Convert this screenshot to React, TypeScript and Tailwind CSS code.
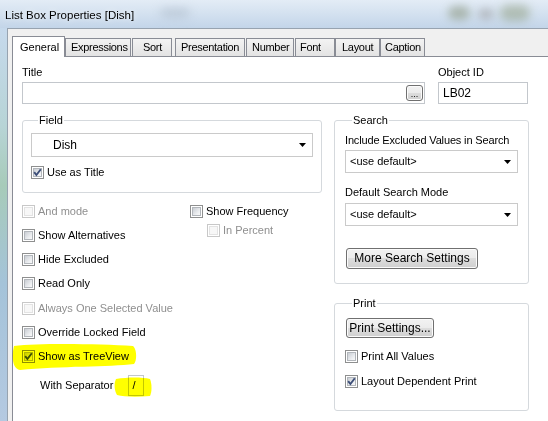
import React from 'react';

const font = "font-['Liberation_Sans',Arial,sans-serif]";

type BoxProps = { checked?: boolean; disabled?: boolean };

const CheckBox: React.FC<BoxProps> = ({ checked, disabled }) => (
  <span
    className={`relative flex h-[13px] w-[13px] shrink-0 items-center justify-center border bg-white ${
      disabled ? 'border-[#c8c8c8]' : 'border-[#8e8f8f]'
    }`}
  >
    <span
      className={`h-[9px] w-[9px] border ${
        disabled
          ? 'border-[#e3e3e3] bg-[#f7f7f7]'
          : 'border-[#b2b6bb] bg-[linear-gradient(135deg,#c9cdd3_0%,#eef0f2_70%,#f8f8f8_100%)]'
      }`}
    />
    {checked && (
      <svg className="absolute left-0 top-0" width="11" height="11" viewBox="0 0 11 11">
        <path d="M2.2 5.2 L4.4 8 L8.8 2.2" fill="none" stroke="#3d4e78" strokeWidth="1.9" />
      </svg>
    )}
  </span>
);

type RowProps = BoxProps & { label: string; className?: string };

const CheckRow: React.FC<RowProps> = ({ label, checked, disabled, className = '' }) => (
  <div className={`flex h-[13px] items-center gap-[3px] whitespace-nowrap ${className}`}>
    <CheckBox checked={checked} disabled={disabled} />
    <span className={disabled ? 'text-[#8f8f8f]' : 'text-black'}>{label}</span>
  </div>
);

const Arrow = () => (
  <svg width="7" height="4" viewBox="0 0 7 4" className="shrink-0">
    <path d="M0 0H7L3.5 4Z" fill="#000" />
  </svg>
);

const Select: React.FC<{ value: string; className?: string }> = ({ value, className = '' }) => (
  <div className={`flex items-center justify-between border border-[#cacaca] bg-white ${className}`}>
    <span>{value}</span>
    <Arrow />
  </div>
);

const Btn: React.FC<{ children: React.ReactNode; className?: string }> = ({ children, className = '' }) => (
  <div
    className={`flex items-center justify-center rounded-[3px] border border-[#707070] bg-[linear-gradient(to_bottom,#f2f2f2_0%,#ebebeb_50%,#dddddd_50%,#cfcfcf_100%)] shadow-[inset_0_0_0_1px_#fbfbfb] ${className}`}
  >
    {children}
  </div>
);

// widths include borders, gaps are the small spaces between unselected tabs
const tabs = [
  { name: 'Expressions', cls: 'ml-0 w-[66px] pl-[5px]' },
  { name: 'Sort', cls: 'ml-[1px] w-[40px] pl-[10px]' },
  { name: 'Presentation', cls: 'ml-[3px] w-[70px] pl-[5px]' },
  { name: 'Number', cls: 'ml-[1px] w-[48px] pl-[5px]' },
  { name: 'Font', cls: 'ml-[1px] w-[40px] pl-[4px]' },
  { name: 'Layout', cls: 'ml-0 w-[45px] pl-[6px]' },
  { name: 'Caption', cls: 'ml-0 w-[45px] pl-[4px]' },
];

export default function App() {
  return (
    <div className={`relative h-[421px] w-[548px] overflow-hidden bg-[#f0f0f0] text-[11px] leading-[13px] text-black ${font}`}>
      {/* title bar */}
      <div className="relative flex h-[28px] items-center overflow-hidden bg-[linear-gradient(to_bottom,#e3ecf6_0%,#d5e2f0_45%,#c3d5e9_100%)] pl-[5px] pt-[2px]">
        <span className="absolute left-[448px] top-[6px] h-[14px] w-[22px] rounded-full bg-[#8f9b86] opacity-60 blur-[4px]" />
        <span className="absolute left-[478px] top-[8px] h-[12px] w-[16px] rounded-full bg-[#9a9a9a] opacity-50 blur-[4px]" />
        <span className="absolute left-[500px] top-[5px] h-[16px] w-[30px] rounded-full bg-[#8a9878] opacity-50 blur-[5px]" />
        <span className="absolute left-[160px] top-[8px] h-[10px] w-[30px] rounded-full bg-[#a9b7c6] opacity-50 blur-[5px]" />
        <span className="relative text-[11.5px] text-black [text-shadow:0_0_6px_#ffffff]">List Box Properties [Dish]</span>
      </div>

      <div className="flex h-[393px]">
        {/* left window frame */}
        <div className="w-[7px] bg-[linear-gradient(to_bottom,#c6d9ec_0%,#b7d4d6_25%,#a7cbb9_40%,#a4c3d9_65%,#b4c9e1_100%)]" />

        {/* client area */}
        <div className="flex flex-1 flex-col border-l border-t border-[#97a3b0] bg-[#f0f0f0] pl-[4px] pt-[7px]">
          {/* tab strip */}
          <div className="relative z-10 -mb-px flex h-[21px] items-end">
            <div className="relative z-10 flex h-[21px] w-[53px] items-center border-x border-t border-[#898c95] bg-white pl-[7px]">
              General
            </div>
            {tabs.map((t) => (
              <div
                key={t.name}
                className={`mb-px flex h-[18px] items-center border-x border-t border-[#898c95] bg-[linear-gradient(to_bottom,#f3f3f3,#e3e3e3)] tracking-[-0.3px] ${t.cls}`}
              >
                {t.name}
              </div>
            ))}
          </div>

          {/* tab page */}
          <div className="flex-1 border-l border-t border-[#898c95] bg-white pl-[9px] pt-[9px]">
            {/* title / object id */}
            <div className="flex">
              <div className="flex flex-col">
                <span>Title</span>
                <div className="mt-[3px] flex h-[22px] w-[403px] items-center justify-end border border-[#c3c7cc] bg-white pr-[1px]">
                  <Btn className="h-[16px] w-[17px] items-end pb-[1px] text-[9px] leading-[9px]">...</Btn>
                </div>
              </div>
              <div className="ml-[13px] flex flex-col">
                <span>Object ID</span>
                <div className="mt-[3px] flex h-[22px] w-[90px] items-center border border-[#c3c7cc] bg-white pl-[4px] text-[12px]">
                  LB02
                </div>
              </div>
            </div>

            <div className="mt-[10px] flex">
              {/* left column */}
              <div className="flex w-[300px] flex-col">
                <fieldset className="rounded-[3px] border border-[#d5d9dd] px-[8px] pb-[13px]">
                  <legend className="ml-[7px] px-[1px]">Field</legend>
                  <Select value="Dish" className="mt-[6px] h-[24px] pl-[21px] pr-[6px] text-[12px]" />
                  <CheckRow label="Use as Title" checked className="mt-[9px]" />
                </fieldset>

                <div className="mt-[12px] flex">
                  <div className="flex w-[168px] flex-col">
                    <CheckRow label="And mode" disabled />
                    <CheckRow label="Show Alternatives" className="mt-[11px]" />
                    <CheckRow label="Hide Excluded" className="mt-[11px]" />
                    <CheckRow label="Read Only" className="mt-[11px]" />
                    <CheckRow label="Always One Selected Value" disabled className="mt-[12px]" />
                    <CheckRow label="Override Locked Field" className="mt-[11px]" />
                    <CheckRow label="Show as TreeView" checked className="mt-[11px]" />
                    <div className="mt-[12px] flex items-center pl-[18px]">
                      <span>With Separator</span>
                      <div className="ml-[15px] flex h-[21px] w-[16px] items-center border border-[#c3c7cc] bg-white pl-[3px]">/</div>
                    </div>
                  </div>
                  <div className="flex flex-col">
                    <CheckRow label="Show Frequency" />
                    <CheckRow label="In Percent" disabled className="ml-[17px] mt-[6px]" />
                  </div>
                </div>
              </div>

              {/* right column */}
              <div className="ml-[12px] flex w-[195px] flex-col">
                <fieldset className="rounded-[3px] border border-[#d5d9dd] pb-[14px] pl-[10px] pr-[10px]">
                  <legend className="ml-[7px] px-[1px]">Search</legend>
                  <div className="mt-[7px] tracking-[-0.15px]">Include Excluded Values in Search</div>
                  <Select value="<use default>" className="mt-[3px] h-[23px] pl-[4px] pr-[6px]" />
                  <div className="mt-[13px]">Default Search Mode</div>
                  <Select value="<use default>" className="mt-[4px] h-[23px] pl-[4px] pr-[6px]" />
                  <Btn className="ml-[1px] mt-[22px] h-[21px] w-[132px] text-[12px]">More Search Settings</Btn>
                </fieldset>

                <fieldset className="mt-[13px] rounded-[3px] border border-[#d5d9dd] pb-[22px] pl-[10px]">
                  <legend className="ml-[7px] px-[1px]">Print</legend>
                  <Btn className="ml-[1px] mt-[8px] h-[20px] w-[88px] text-[12px]">Print Settings...</Btn>
                  <CheckRow label="Print All Values" className="mt-[12px]" />
                  <CheckRow label="Layout Dependent Print" checked className="mt-[12px]" />
                </fieldset>
              </div>
            </div>
          </div>
        </div>
      </div>

      {/* yellow marker highlights drawn over the page */}
      <svg className="pointer-events-none absolute left-0 top-0 mix-blend-multiply" width="548" height="421" viewBox="0 0 548 421">
        <path
          d="M14 346 C40 343 100 344 133 346 C137 349 137 361 134 364 C110 367 60 366 20 370 C14 369 12 362 13 351 Z"
          fill="#ffff00"
        />
        <path d="M116 379 C128 377 142 377 150 379 C152 384 152 392 150 396 C138 397 124 397 117 395 C114 390 114 383 116 379 Z" fill="#ffff00" />
      </svg>
    </div>
  );
}
